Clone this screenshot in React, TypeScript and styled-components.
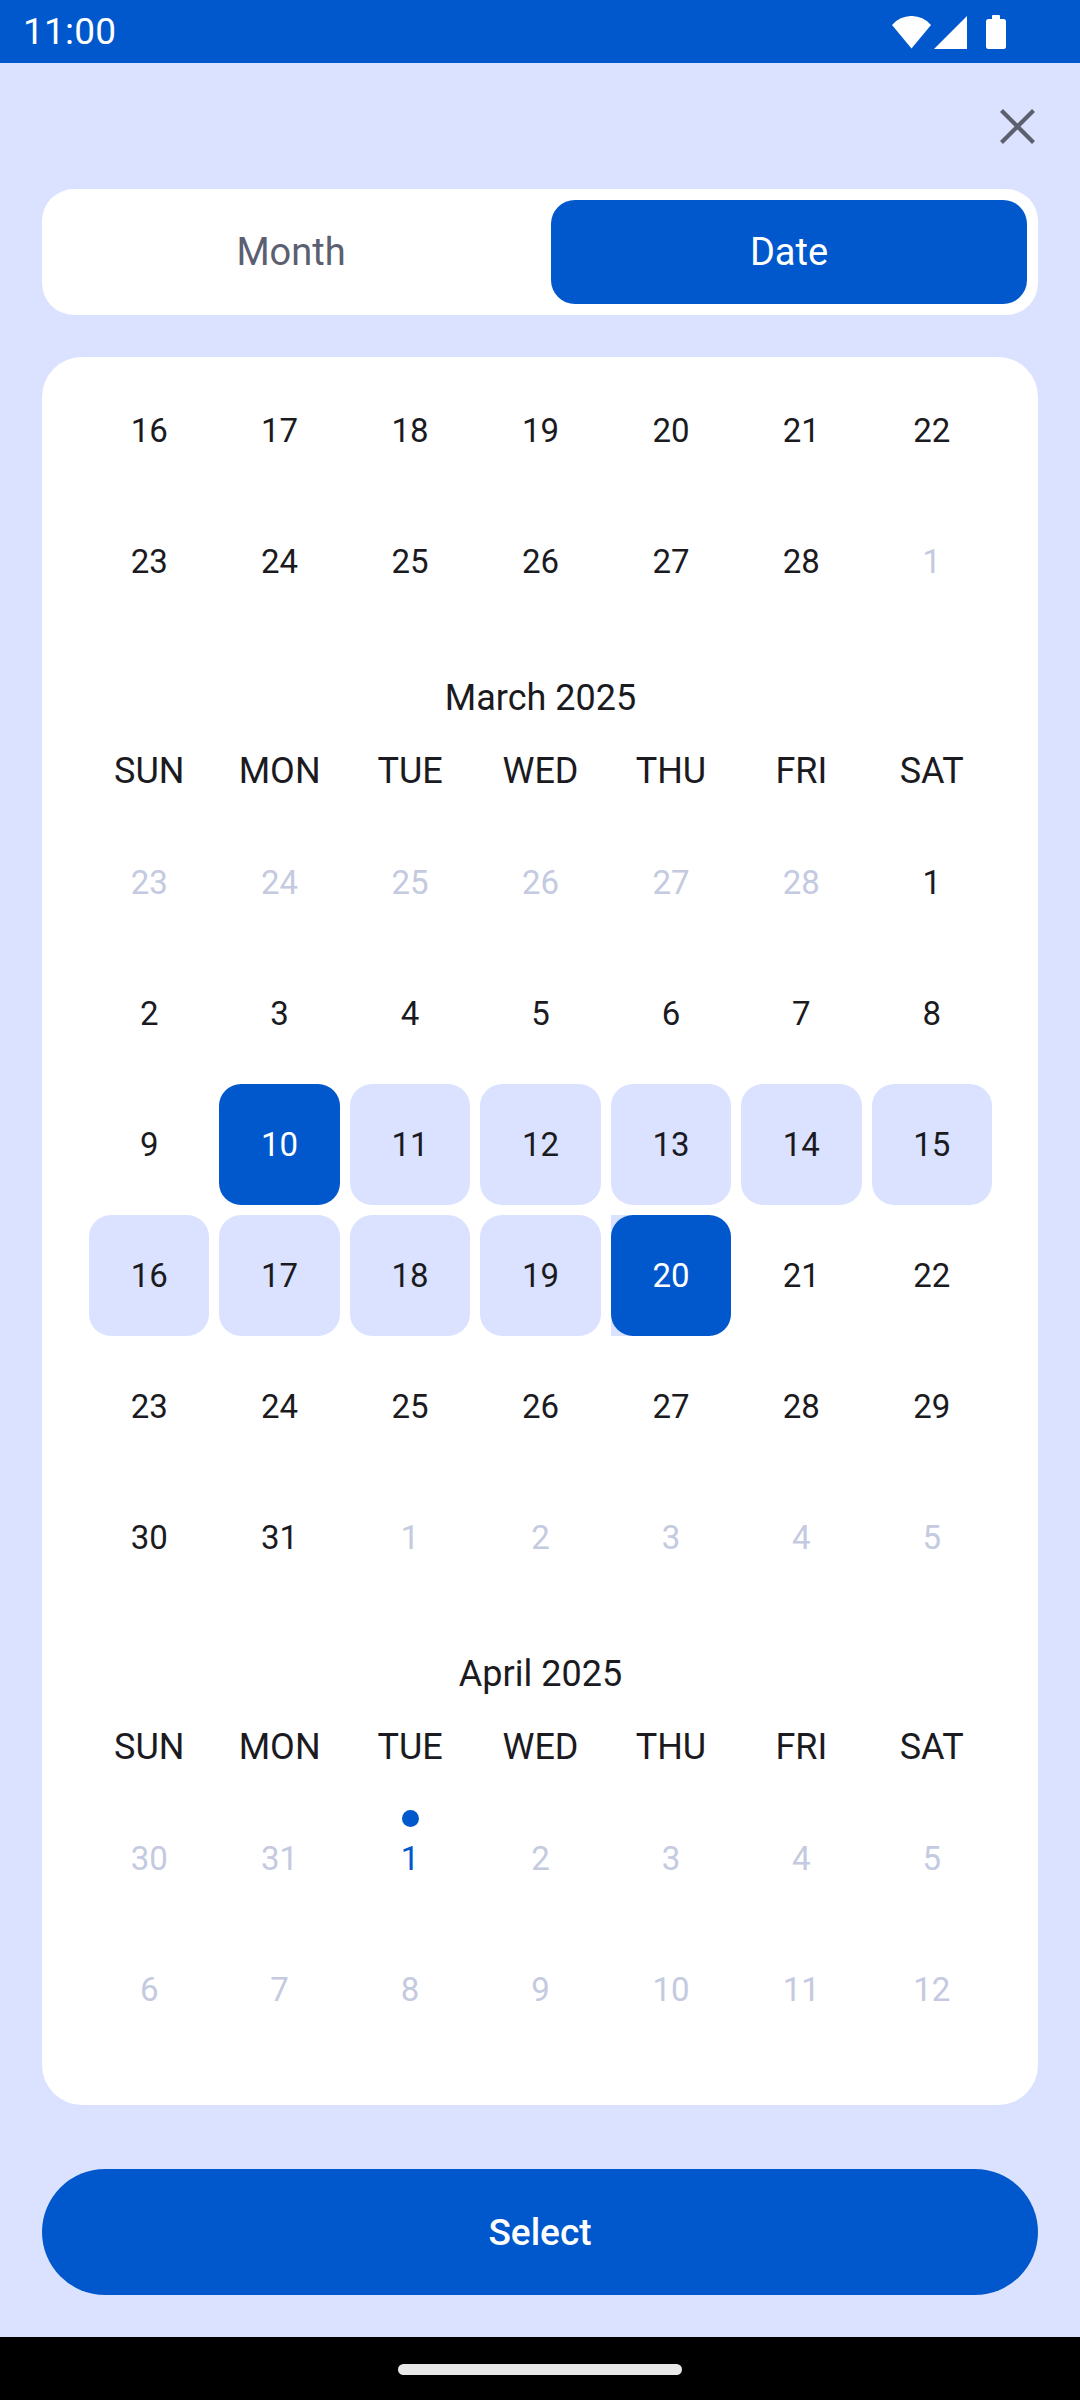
import React from "react";
import styled, { createGlobalStyle, css } from "styled-components";

const BLUE = "#0058CC";
const LIGHT = "#DAE2FF";
const INK = "#1B1B1F";
const MUTED = "#C4CADF";

const GlobalStyle = createGlobalStyle`
  html, body {
    margin: 0;
    padding: 0;
    background: ${LIGHT};
  }
  body {
    font-family: Roboto, "Noto Sans", "Liberation Sans", sans-serif;
    -webkit-font-smoothing: antialiased;
  }
  * { box-sizing: border-box; }
`;

const Screen = styled.div`
  width: 1080px;
  height: 2400px;
  display: flex;
  flex-direction: column;
  background: ${LIGHT};
  overflow: hidden;
`;

const StatusBar = styled.div`
  height: 63px;
  flex: none;
  background: ${BLUE};
  display: flex;
  align-items: center;
  justify-content: space-between;
  padding: 0 74px 0 23px;
`;

const Time = styled.span`
  color: #ffffff;
  font-size: 37px;
  font-weight: 400;
  letter-spacing: 0.2px;
`;

const StatusIcons = styled.div`
  display: flex;
  align-items: flex-end;
  height: 34px;
  margin-top: 1px;
`;

const TopBar = styled.div`
  height: 126px;
  flex: none;
  display: flex;
  align-items: center;
  justify-content: flex-end;
  padding-right: 44px;
`;

const CloseButton = styled.button`
  width: 37px;
  height: 37px;
  padding: 0;
  border: none;
  background: transparent;
  display: flex;
  align-items: center;
  justify-content: center;
`;

const Segmented = styled.div`
  flex: none;
  margin: 0 42px;
  height: 126px;
  padding: 11px;
  background: #ffffff;
  border-radius: 32px;
  display: grid;
  grid-template-columns: 1fr 1fr;
  column-gap: 22px;
`;

const Segment = styled.div<{ $active?: boolean }>`
  display: flex;
  align-items: center;
  justify-content: center;
  border-radius: 24px;
  font-size: 38px;
  font-weight: 400;
  color: ${(p) => (p.$active ? "#ffffff" : "#5B5F71")};
  background: ${(p) => (p.$active ? BLUE : "transparent")};
`;

const CalendarCard = styled.div`
  flex: none;
  margin: 42px 42px 0;
  padding: 8px 41px 50px 42px;
  background: #ffffff;
  border-radius: 40px;
  overflow: hidden;
`;

const MonthBlock = styled.section<{ $continued?: boolean }>`
  display: flex;
  flex-direction: column;
  padding-top: ${(p) => (p.$continued ? "0" : "45px")};
`;

const MonthTitle = styled.div`
  height: 53px;
  line-height: 53px;
  text-align: center;
  font-size: 36px;
  font-weight: 400;
  color: ${INK};
`;

const WeekRow = styled.div`
  height: 92px;
  display: grid;
  grid-template-columns: repeat(7, 1fr);
  align-items: center;
`;

const Weekday = styled.div`
  text-align: center;
  font-size: 36px;
  font-weight: 400;
  color: ${INK};
`;

const DayRow = styled.div`
  height: 131px;
  display: grid;
  grid-template-columns: repeat(7, 1fr);
`;

type Variant = "plain" | "out" | "range" | "start" | "end" | "today";

const CellSlot = styled.div<{ $tail?: boolean }>`
  position: relative;
  padding: 5px;
  ${(p) =>
    p.$tail &&
    css`
      &::before {
        content: "";
        position: absolute;
        top: 5px;
        bottom: 5px;
        left: 5px;
        width: 50%;
        background: ${LIGHT};
      }
    `}
`;

const variantStyles: Record<Variant, ReturnType<typeof css>> = {
  plain: css`
    color: ${INK};
  `,
  out: css`
    color: ${MUTED};
  `,
  range: css`
    color: ${INK};
    background: ${LIGHT};
  `,
  start: css`
    color: #ffffff;
    background: ${BLUE};
  `,
  end: css`
    color: #ffffff;
    background: ${BLUE};
  `,
  today: css`
    color: ${BLUE};
  `,
};

const DayBox = styled.div<{ $variant: Variant }>`
  position: relative;
  z-index: 1;
  height: 100%;
  border-radius: 22px;
  display: flex;
  align-items: center;
  justify-content: center;
  font-size: 33px;
  font-weight: 400;
  ${(p) => variantStyles[p.$variant]}
`;

const TodayDot = styled.span`
  position: absolute;
  top: 12px;
  left: 50%;
  width: 17px;
  height: 17px;
  margin-left: -8.5px;
  border-radius: 50%;
  background: ${BLUE};
`;

const SelectButton = styled.button`
  flex: none;
  margin: 64px 42px 0;
  height: 126px;
  border: none;
  border-radius: 63px;
  background: ${BLUE};
  color: #ffffff;
  font-family: Roboto, "Noto Sans", "Liberation Sans", sans-serif;
  font-size: 37px;
  font-weight: 500;
`;

const NavBar = styled.div`
  margin-top: auto;
  height: 63px;
  flex: none;
  background: #000000;
  display: flex;
  align-items: center;
  justify-content: center;
`;

const NavHandle = styled.div`
  width: 284px;
  height: 11px;
  border-radius: 6px;
  background: #e8e8e8;
  margin-top: 1px;
`;

type Day = { d: number; v?: Variant };

const WEEKDAYS = ["SUN", "MON", "TUE", "WED", "THU", "FRI", "SAT"];

const seq = (a: number, b: number, v?: Variant): Day[] =>
  Array.from({ length: b - a + 1 }, (_, i) => ({ d: a + i, v }));

const months: { title?: string; rows: Day[][] }[] = [
  {
    rows: [seq(16, 22), [...seq(23, 28), { d: 1, v: "out" }]],
  },
  {
    title: "March 2025",
    rows: [
      [...seq(23, 28, "out"), { d: 1 }],
      seq(2, 8),
      [{ d: 9 }, { d: 10, v: "start" }, ...seq(11, 15, "range")],
      [...seq(16, 19, "range"), { d: 20, v: "end" }, { d: 21 }, { d: 22 }],
      seq(23, 29),
      [{ d: 30 }, { d: 31 }, ...seq(1, 5, "out")],
    ],
  },
  {
    title: "April 2025",
    rows: [
      [{ d: 30, v: "out" }, { d: 31, v: "out" }, { d: 1, v: "today" }, ...seq(2, 5, "out")],
      seq(6, 12, "out"),
    ],
  },
];

const WifiIcon = () => (
  <svg width="39" height="33" viewBox="0 0 39 33">
    <path d="M19.5 32.5 L0 9 A25.6 25.6 0 0 1 39 9 Z" fill="#ffffff" />
  </svg>
);

const SignalIcon = () => (
  <svg width="33" height="33" viewBox="0 0 33 33" style={{ marginLeft: 3 }}>
    <path d="M0 33 L33 33 L33 0 Z" fill="#ffffff" />
  </svg>
);

const BatteryIcon = () => (
  <svg width="20" height="34" viewBox="0 0 20 34" style={{ marginLeft: 19 }}>
    <rect x="6" y="0" width="8" height="5" rx="1" fill="#ffffff" />
    <rect x="0" y="4" width="20" height="30" rx="2.5" fill="#ffffff" />
  </svg>
);

const CloseIcon = () => (
  <svg width="37" height="37" viewBox="0 0 37 37">
    <path
      d="M2.5 2.5 L34.5 34.5 M34.5 2.5 L2.5 34.5"
      stroke="#5C5F6C"
      strokeWidth="4.2"
      strokeLinecap="butt"
    />
  </svg>
);

export default function App() {
  return (
    <>
      <GlobalStyle />
      <Screen>
        <StatusBar>
          <Time>11:00</Time>
          <StatusIcons>
            <WifiIcon />
            <SignalIcon />
            <BatteryIcon />
          </StatusIcons>
        </StatusBar>

        <TopBar>
          <CloseButton aria-label="Close">
            <CloseIcon />
          </CloseButton>
        </TopBar>

        <Segmented>
          <Segment>Month</Segment>
          <Segment $active>Date</Segment>
        </Segmented>

        <CalendarCard>
          {months.map((m, mi) => (
            <MonthBlock key={mi} $continued={!m.title}>
              {m.title && (
                <>
                  <MonthTitle>{m.title}</MonthTitle>
                  <WeekRow>
                    {WEEKDAYS.map((w) => (
                      <Weekday key={w}>{w}</Weekday>
                    ))}
                  </WeekRow>
                </>
              )}
              {m.rows.map((row, ri) => (
                <DayRow key={ri}>
                  {row.map((day, di) => {
                    const v: Variant = day.v ?? "plain";
                    return (
                      <CellSlot key={di} $tail={v === "end"}>
                        <DayBox $variant={v}>
                          {v === "today" && <TodayDot />}
                          {day.d}
                        </DayBox>
                      </CellSlot>
                    );
                  })}
                </DayRow>
              ))}
            </MonthBlock>
          ))}
        </CalendarCard>

        <SelectButton>Select</SelectButton>

        <NavBar>
          <NavHandle />
        </NavBar>
      </Screen>
    </>
  );
}
